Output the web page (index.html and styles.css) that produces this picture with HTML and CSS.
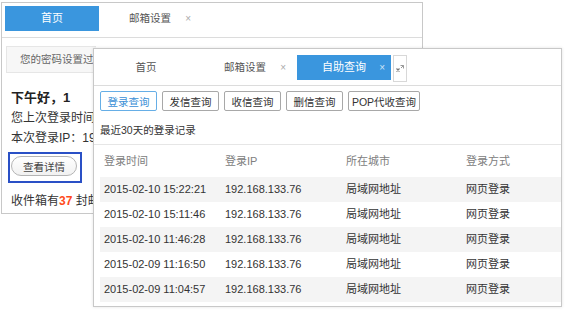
FILE: index.html
```html
<!DOCTYPE html>
<html lang="zh-CN">
<head>
    <meta charset="UTF-8">
    <title>自助查询</title>
    <link rel="stylesheet" href="styles.css">
</head>
<body>
<div class="desk">
    <div class="win win--back">
        <div class="tabs tabs--back">
            <div class="tab tab--active">首页</div>
            <div class="tab">邮箱设置<span class="tab__close">×</span></div>
        </div>
        <div class="home">
            <div class="notice">您的密码设置过于简单</div>
            <div class="home__lines">
                <div class="home__greet">下午好，1</div>
                <div class="home__line">您上次登录时间</div>
                <div class="home__line">本次登录IP：19</div>
            </div>
            <div class="focus">
                <button class="pill">查看详情</button>
            </div>
            <div class="home__line home__line--inbox">收件箱有<b class="count">37</b> 封邮</div>
        </div>
    </div>

    <div class="win win--front">
        <div class="tabs tabs--front">
            <div class="tab">首页</div>
            <div class="tab">邮箱设置<span class="tab__close">×</span></div>
            <div class="tab tab--active">自助查询<span class="tab__close">×</span></div>
            <div class="tab-tool">
                <svg width="8" height="7" viewBox="0 0 8 7">
                    <path d="M0.5 3.5L3.5 6.5M3.5 3.5L0.5 6.5" fill="none" stroke="#777" stroke-width="1.2"/>
                    <path d="M4.5 0.5H7.5V3.5M7.5 0.5L5 3" fill="none" stroke="#999" stroke-width="1"/>
                </svg>
            </div>
        </div>
        <div class="query">
            <div class="query__btns">
                <button class="qbtn qbtn--active">登录查询</button>
                <button class="qbtn">发信查询</button>
                <button class="qbtn">收信查询</button>
                <button class="qbtn">删信查询</button>
                <button class="qbtn qbtn--wide">POP代收查询</button>
            </div>
            <div class="query__caption">最近30天的登录记录</div>
        </div>
        <div class="log">
            <div class="log__row log__row--head">
                <span>登录时间</span><span>登录IP</span><span>所在城市</span><span>登录方式</span>
            </div>
            <div class="log__row">
                <span>2015-02-10 15:22:21</span><span>192.168.133.76</span><span>局域网地址</span><span>网页登录</span>
            </div>
            <div class="log__row">
                <span>2015-02-10 15:11:46</span><span>192.168.133.76</span><span>局域网地址</span><span>网页登录</span>
            </div>
            <div class="log__row">
                <span>2015-02-10 11:46:28</span><span>192.168.133.76</span><span>局域网地址</span><span>网页登录</span>
            </div>
            <div class="log__row">
                <span>2015-02-09 11:16:50</span><span>192.168.133.76</span><span>局域网地址</span><span>网页登录</span>
            </div>
            <div class="log__row">
                <span>2015-02-09 11:04:57</span><span>192.168.133.76</span><span>局域网地址</span><span>网页登录</span>
            </div>
        </div>
    </div>
</div>
</body>
</html>
```

FILE: styles.css
```css
html,
body {
    margin: 0;
    padding: 0;
    background: #fff;
}

.desk {
    position: relative;
    width: 565px;
    height: 312px;
    font-family: "Liberation Sans", "Noto Sans CJK SC", sans-serif;
    font-size: 10.5px;
    color: #333;
}

.win {
    position: absolute;
    box-sizing: border-box;
    background: #fff;
    border: 1px solid #c8c8c8;
    overflow: hidden;
}

.win--back {
    left: 1px;
    top: 2px;
    width: 422px;
    height: 212px;
}

.win--front {
    left: 93px;
    top: 48px;
    width: 469px;
    height: 259px;
    box-shadow: 0 0 3px rgba(0, 0, 0, .12);
}

/* tabs */

.tabs {
    display: flex;
    align-items: flex-start;
    border-bottom: 1px solid #dcdcdc;
    box-sizing: border-box;
}

.tabs--back {
    height: 35px;
    padding: 3px 0 0 3px;
    gap: 4px;
}

.tabs--front {
    height: 37px;
    padding: 6px 0 0 5px;
    gap: 5px;
}

.tab {
    position: relative;
    width: 94px;
    height: 25px;
    line-height: 25px;
    text-align: center;
    color: #555;
}

.tab--active {
    background: #3a96de;
    color: #fff;
    font-size: 11px;
}

.tab__close {
    position: absolute;
    right: 6px;
    top: 0;
    font-size: 10px;
    color: #aaa;
}

.tab--active .tab__close {
    color: #cfe4f6;
}

.tab-tool {
    box-sizing: border-box;
    width: 14px;
    height: 27px;
    margin-left: -3px;
    border: 1px solid #d8d8d8;
    display: flex;
    align-items: center;
    justify-content: center;
}

/* back window home, cut off where the front window starts */

.home {
    width: 90px;
    padding: 8px 0 0 4px;
    overflow: hidden;
}

.notice {
    box-sizing: border-box;
    width: 420px;
    height: 27px;
    line-height: 25px;
    padding-left: 13px;
    background: #f7f7f7;
    border: 1px solid #e6e6e6;
    color: #666;
    white-space: nowrap;
}

.home__lines {
    margin-top: 15px;
    padding-left: 5px;
}

.home__greet {
    line-height: 20px;
    font-size: 13px;
    font-weight: 700;
    color: #222;
    white-space: nowrap;
}

.home__line {
    line-height: 20px;
    font-size: 12px;
    white-space: nowrap;
    color: #333;
}

.home__line--inbox {
    margin-top: 8px;
    padding-left: 5px;
}

.count {
    color: #ff4a1a;
}

.focus {
    box-sizing: border-box;
    width: 74px;
    height: 31px;
    margin: 4px 0 0 2px;
    padding: 2px 0 0 1px;
    border: 2px solid #2a50c6;
}

.pill {
    display: block;
    box-sizing: border-box;
    width: 66px;
    height: 20px;
    padding: 0;
    border: 1px solid #b4b4b4;
    border-radius: 10px;
    background: linear-gradient(#fff, #f1f1f1);
    font: inherit;
    font-size: 10.5px;
    color: #444;
}

/* front window query */

.query {
    padding: 5px 0 0 6px;
    height: 59px;
    box-sizing: border-box;
    border-bottom: 1px solid #e6e6e6;
}

.query__btns {
    display: flex;
    gap: 5px;
}

.qbtn {
    box-sizing: border-box;
    width: 57px;
    height: 20px;
    padding: 0;
    border: 1px solid #a8a8a8;
    border-radius: 2px;
    background: #fff;
    font: inherit;
    color: #333;
}

.qbtn--wide {
    width: 72px;
}

.qbtn--active {
    border-color: #66aee6;
    color: #3a8fd6;
}

.query__caption {
    margin-top: 9px;
    line-height: 20px;
}

.log {
    margin-left: 6px;
}

.log__row {
    display: grid;
    grid-template-columns: 121px 121px 120px 1fr;
    height: 25px;
    line-height: 25px;
    font-size: 11px;
}

.log__row span {
    padding-left: 4px;
    white-space: nowrap;
}

.log__row--head {
    height: 32px;
    line-height: 32px;
    color: #808080;
}

.log__row:nth-child(even) {
    background: #f4f4f4;
}
```
